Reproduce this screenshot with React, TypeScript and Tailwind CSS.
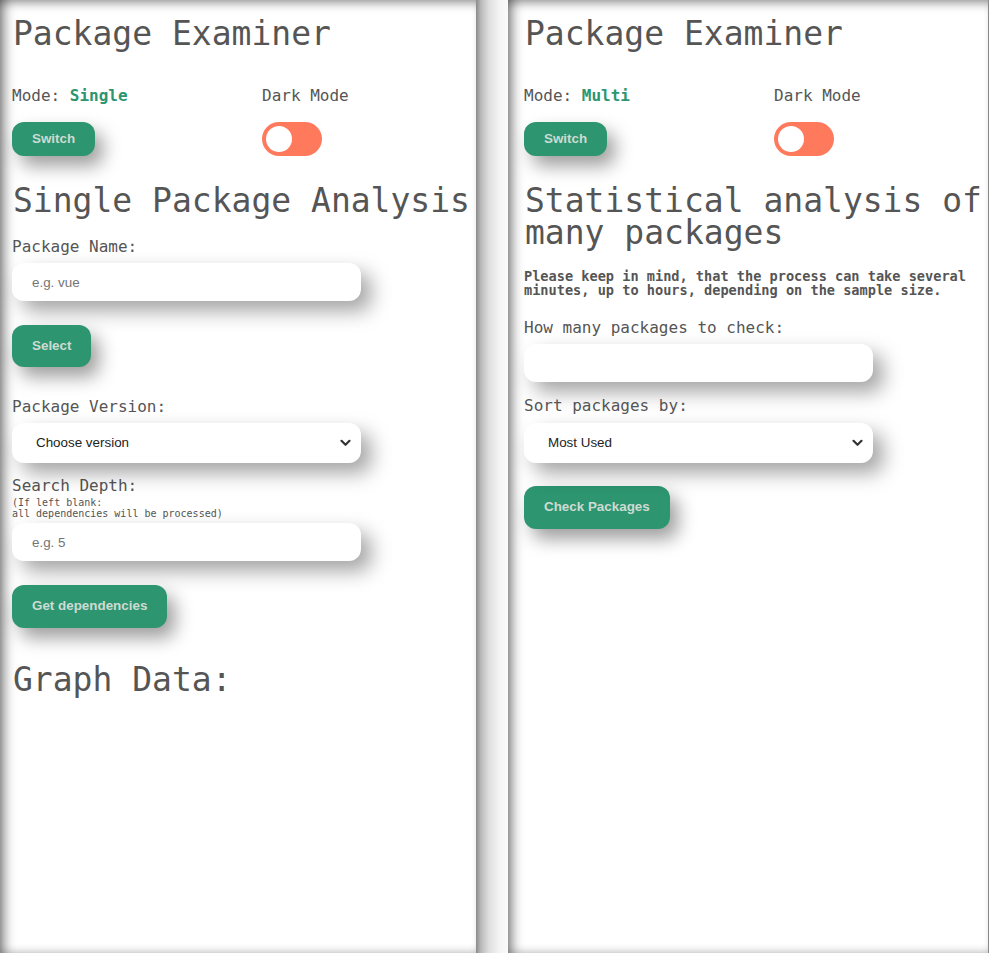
import React from "react";

const mono = { fontFamily: '"DejaVu Sans Mono", "Liberation Mono", monospace' };
const sans = { fontFamily: '"Liberation Sans", Arial, sans-serif' };

function Chevron() {
  return (
    <svg width="11" height="8" viewBox="0 0 11 8" className="absolute right-[10px] top-1/2 -translate-y-1/2 pointer-events-none">
      <path d="M1.5 1.8 L5.5 5.8 L9.5 1.8" fill="none" stroke="#333" strokeWidth="2.2" strokeLinecap="round" strokeLinejoin="round" />
    </svg>
  );
}

function Btn({ children, h }: { children: React.ReactNode; h: string }) {
  return (
    <button
      style={sans}
      className={`${h} px-[20px] rounded-[12px] bg-[#2d9570] text-[#cddbd3] text-[13.4px] font-bold shadow-[8px_10px_18px_rgba(0,0,0,0.38)] self-start`}
    >
      {children}
    </button>
  );
}

function TextInput({ placeholder }: { placeholder?: string }) {
  return (
    <input
      style={sans}
      placeholder={placeholder}
      className="w-[349px] h-[38px] rounded-[12px] bg-white pl-[20px] text-[13.4px] text-[#333] placeholder:text-[#757575] outline-none shadow-[10px_10px_20px_rgba(0,0,0,0.36)]"
    />
  );
}

function SelectBox({ label }: { label: string }) {
  return (
    <div className="relative w-[349px] h-[40px] rounded-[12px] bg-white shadow-[10px_10px_20px_rgba(0,0,0,0.36)] flex items-center pl-[24px]">
      <span style={sans} className="text-[13.4px] text-[#222]">{label}</span>
      <Chevron />
    </div>
  );
}

function Header({ mode }: { mode: string }) {
  return (
    <>
      <h1 className="text-[33px] leading-[40px] text-[#555] pl-[1px]">Package Examiner</h1>
      <div className="flex mt-[30px]">
        <div className="w-[250px] flex flex-col">
          <div className="text-[16px] leading-[24px] text-[#555]">
            Mode: <span className="font-bold text-[#2d9570]">{mode}</span>
          </div>
          <div className="mt-[14px] flex">
            <Btn h="h-[34px]">Switch</Btn>
          </div>
        </div>
        <div className="flex flex-col">
          <div className="text-[16px] leading-[24px] text-[#555]">Dark Mode</div>
          <div className="mt-[14px] w-[60px] h-[34px] rounded-full bg-[#ff7a5c] flex items-center pl-[4px]">
            <div className="w-[26px] h-[26px] rounded-full bg-white" />
          </div>
        </div>
      </div>
    </>
  );
}

const panelShadow =
  "shadow-[inset_9px_0_12px_-5px_rgba(0,0,0,0.5),inset_0_9px_10px_-5px_rgba(0,0,0,0.3),inset_0_-7px_8px_-5px_rgba(0,0,0,0.12)]";

export default function App() {
  return (
    <div style={mono} className="w-[989px] h-[953px] flex bg-white overflow-hidden">
      <div className={`w-[476px] h-full bg-white ${panelShadow} pt-[14px] pl-[12px] flex flex-col`}>
        <Header mode="Single" />
        <h2 className="mt-[29px] text-[33px] leading-[32px] text-[#555] pl-[1px] whitespace-nowrap">Single Package Analysis</h2>
        <label className="mt-[18px] text-[16px] leading-[24px] text-[#555]">Package Name:</label>
        <div className="mt-[4px]"><TextInput placeholder="e.g. vue" /></div>
        <div className="mt-[24px] flex"><Btn h="h-[42px]">Select</Btn></div>
        <label className="mt-[28px] text-[16px] leading-[24px] text-[#555]">Package Version:</label>
        <div className="mt-[4px]"><SelectBox label="Choose version" /></div>
        <label className="mt-[12px] text-[16px] leading-[22px] text-[#555]">Search Depth:</label>
        <div className="text-[10px] leading-[11px] text-[#555]">
          (If left blank:
          <br />
          all dependencies will be processed)
        </div>
        <div className="mt-[4px]"><TextInput placeholder="e.g. 5" /></div>
        <div className="mt-[24px] flex"><Btn h="h-[43px]">Get dependencies</Btn></div>
        <h2 className="mt-[36px] text-[33px] leading-[32px] text-[#555] pl-[1px]">Graph Data:</h2>
      </div>
      <div className="w-[32px] h-full bg-[linear-gradient(to_right,#8a8a8a,#b8b8b8_15%,#dedede_40%,#f3f3f3_70%,#fafafa)]" />
      <div className={`flex-1 h-full bg-white ${panelShadow} border-r border-[#8a8a8a] pt-[14px] pl-[16px] flex flex-col`}>
        <Header mode="Multi" />
        <h2 className="mt-[29px] text-[33px] leading-[32px] text-[#555] pl-[1px]">
          Statistical analysis of
          <br />
          many packages
        </h2>
        <p className="mt-[20px] text-[13.6px] leading-[14px] font-bold text-[#555] whitespace-nowrap">
          Please keep in mind, that the process can take several
          <br />
          minutes, up to hours, depending on the sample size.
        </p>
        <label className="mt-[19px] text-[16px] leading-[24px] text-[#555]">How many packages to check:</label>
        <div className="mt-[4px]"><TextInput /></div>
        <label className="mt-[12px] text-[16px] leading-[24px] text-[#555]">Sort packages by:</label>
        <div className="mt-[5px]"><SelectBox label="Most Used" /></div>
        <div className="mt-[23px] flex"><Btn h="h-[43px]">Check Packages</Btn></div>
      </div>
    </div>
  );
}
